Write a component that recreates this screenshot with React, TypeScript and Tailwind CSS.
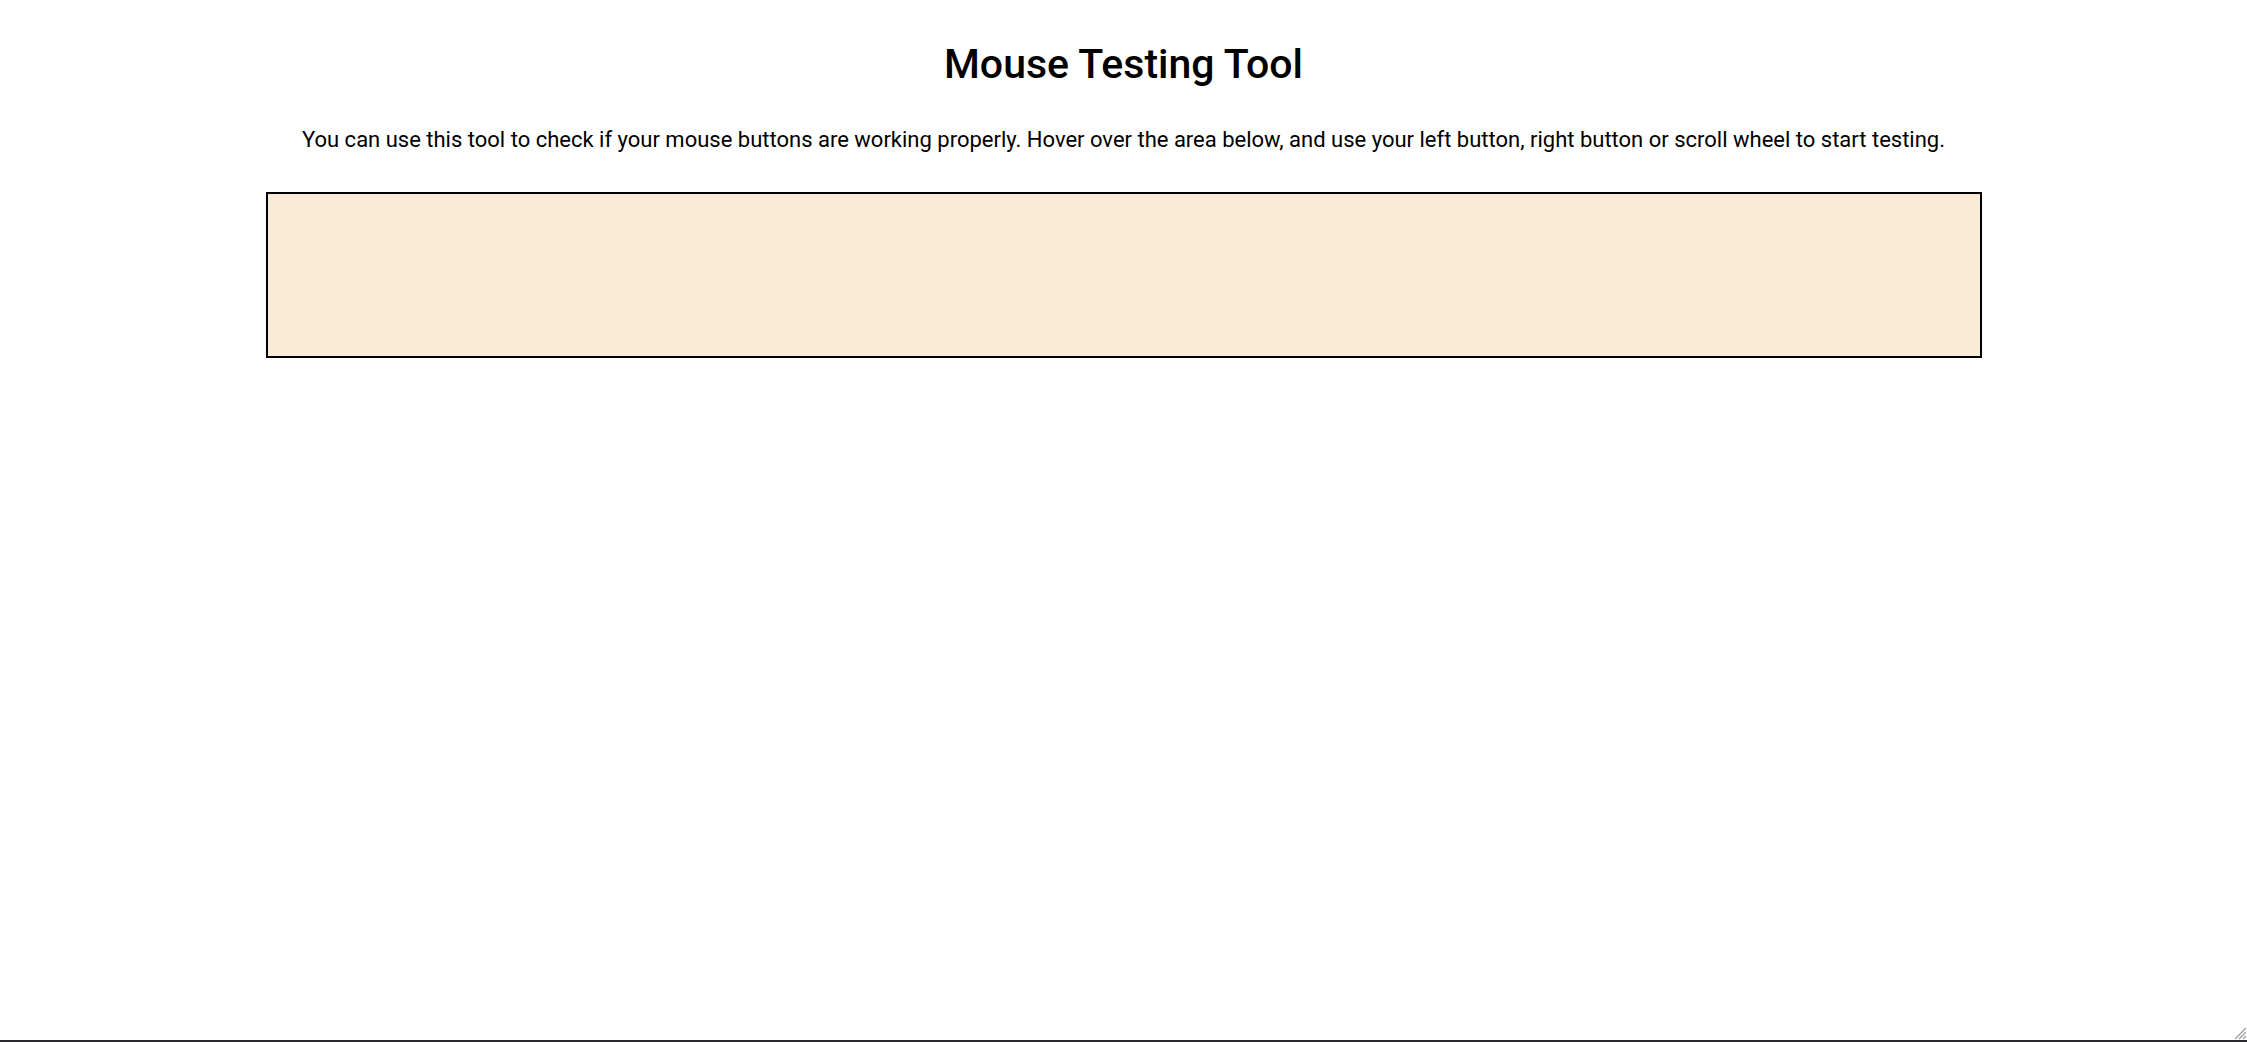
export default function App() {
  return (
    <div className="relative h-[1042px] w-full bg-white font-['Roboto',sans-serif] text-black">
      <div className="flex flex-col items-center pt-[40px]">
        <h1 className="text-[41px] font-medium leading-[48px]">Mouse Testing Tool</h1>
        <p className="mt-[38px] text-[22px] leading-[28px]">
          You can use this tool to check if your mouse buttons are working properly. Hover over the area below, and use
          your left button, right button or scroll wheel to start testing.
        </p>
        <div className="mt-[38px] h-[166px] w-[1716px] border-2 border-black bg-[#faebd7]" />
      </div>
      <div className="absolute bottom-0 left-0 h-[2px] w-full bg-[#2a2a2e]" />
      <svg className="absolute bottom-[2px] right-0" width="16" height="16" viewBox="0 0 16 16">
        <path d="M15 4 L4 15 M15 8 L8 15 M15 12 L12 15" stroke="#9a9a9a" strokeWidth="1.2" />
      </svg>
    </div>
  );
}
